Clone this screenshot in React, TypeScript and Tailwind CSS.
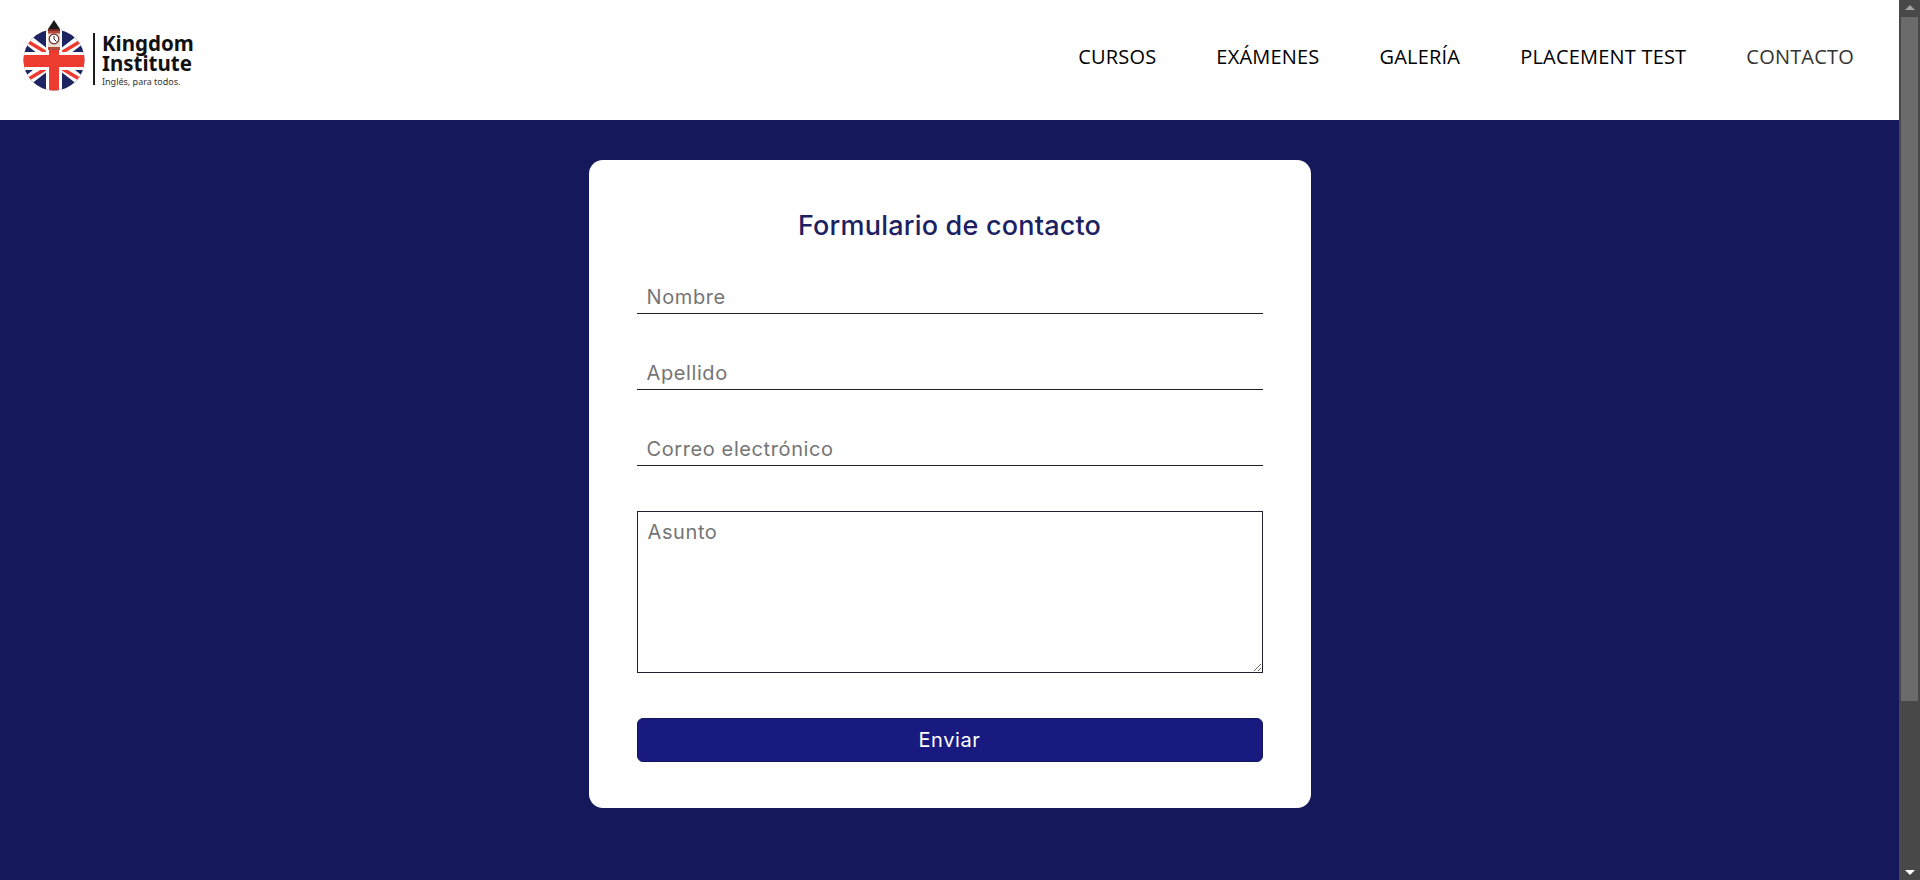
import { FormEvent } from "react";

const navLinks = ["CURSOS", "EXÁMENES", "GALERÍA", "PLACEMENT TEST"];

function Logo() {
  return (
    <div className="flex items-center">
      <svg width="64" height="72" viewBox="0 0 64 72" className="mb-[8px] shrink-0">
        <defs>
          <clipPath id="flag">
            <circle cx="31" cy="40" r="30.5" />
          </clipPath>
        </defs>
        <g clipPath="url(#flag)">
          <rect x="0" y="8" width="64" height="64" fill="#1c2461" />
          <path d="M0 16 L62 64 M62 16 L0 64" stroke="#ffffff" strokeWidth="10" />
          <path d="M4 21 L24 33 M58 21 L38 33 M4 60 L24 48 M58 60 L38 48" stroke="#ee3b2f" strokeWidth="3.5" />
          <rect x="23" y="8" width="16" height="64" fill="#ffffff" />
          <rect x="0" y="32" width="64" height="18" fill="#ffffff" />
          <rect x="26" y="8" width="10" height="64" fill="#ee3b2f" />
          <rect x="0" y="35" width="64" height="12" fill="#ee3b2f" />
        </g>
        <path d="M31 0 L37 9 H25 Z" fill="#1a1a1a" />
        <rect x="25" y="9" width="12" height="2" fill="#7a2a22" />
        <rect x="25" y="11" width="12" height="19" fill="#e9dcd2" />
        <rect x="25" y="11" width="12" height="2.5" fill="#b34a3e" />
        <circle cx="31" cy="19" r="4.8" fill="#ffffff" stroke="#6b2a24" strokeWidth="1.2" />
        <path d="M31 16 V19 L33.5 21.5" stroke="#222222" strokeWidth="1" fill="none" />
        <rect x="25" y="27" width="12" height="3" fill="#b34a3e" />
      </svg>
      <div className="mb-[2px] ml-[6px] h-[52px] w-[2px] bg-[#1a1a1a]" />
      <div className="mb-[2px] ml-[7px] flex h-[52px] flex-col font-['Noto_Sans',sans-serif]">
        <span className="text-[20.5px] leading-[20px] font-bold text-[#111111]">
          Kingdom
          <br />
          Institute
        </span>
        <span className="mt-[3px] text-[9px] leading-[12px] text-[#333333]">Inglés, para todos.</span>
      </div>
    </div>
  );
}

function Header() {
  return (
    <header className="flex h-[120px] shrink-0 items-center justify-between bg-white pr-[45px] pl-[23px]">
      <Logo />
      <nav className="flex items-center gap-[60px] pb-[6px] font-['Open_Sans',sans-serif] text-[20px] tracking-[0.2px] text-black">
        {navLinks.map((link) => (
          <a key={link} href="#">
            {link}
          </a>
        ))}
        <a href="#" className="text-[#333333]">
          CONTACTO
        </a>
      </nav>
    </header>
  );
}

function UnderlineInput({ placeholder }: { placeholder: string }) {
  return (
    <input
      type="text"
      placeholder={placeholder}
      className="h-[33px] w-full border-b border-[#1f1f2e] px-[10px] text-[20px] tracking-[0.6px] outline-none placeholder:text-[#757575]"
    />
  );
}

function ContactForm() {
  const handleSubmit = (e: FormEvent) => e.preventDefault();
  return (
    <form
      onSubmit={handleSubmit}
      className="mt-[40px] flex h-[648px] w-[722px] flex-col rounded-[14px] bg-white px-[48px] pt-[49px] font-['Inter',sans-serif]"
    >
      <h1 className="text-center text-[27px] leading-[34px] font-medium tracking-[0.2px] text-[#1c2161]">
        Formulario de contacto
      </h1>
      <div className="mt-[38px] flex flex-col gap-[43px]">
        <UnderlineInput placeholder="Nombre" />
        <UnderlineInput placeholder="Apellido" />
        <UnderlineInput placeholder="Correo electrónico" />
      </div>
      <textarea
        placeholder="Asunto"
        className="mt-[45px] h-[162px] w-full border border-[#1f1f2e] px-[10px] py-[5px] text-[20px] tracking-[0.6px] outline-none placeholder:text-[#757575]"
      />
      <button
        type="submit"
        className="mt-[45px] h-[44px] w-full rounded-[6px] border border-[#14165e] bg-[#181a80] text-[20px] tracking-[0.6px] text-white"
      >
        Enviar
      </button>
    </form>
  );
}

function FakeScrollbar() {
  return (
    <div className="flex h-full w-[21px] shrink-0 flex-col items-center bg-[#484848]">
      <div className="mt-[5px] h-0 w-0 border-x-[5px] border-b-[5px] border-x-transparent border-b-[#a3a3a3]" />
      <div className="mt-[7px] h-[684px] w-[17px] bg-[#6b6b6b]" />
      <div className="mt-auto mb-[5px] h-0 w-0 border-x-[5px] border-t-[5px] border-x-transparent border-t-white" />
    </div>
  );
}

export default function App() {
  return (
    <div className="flex h-[880px] w-full overflow-hidden">
      <div className="flex min-w-0 flex-1 flex-col bg-[#15185b]">
        <Header />
        <main className="flex flex-1 justify-center">
          <ContactForm />
        </main>
      </div>
      <FakeScrollbar />
    </div>
  );
}
